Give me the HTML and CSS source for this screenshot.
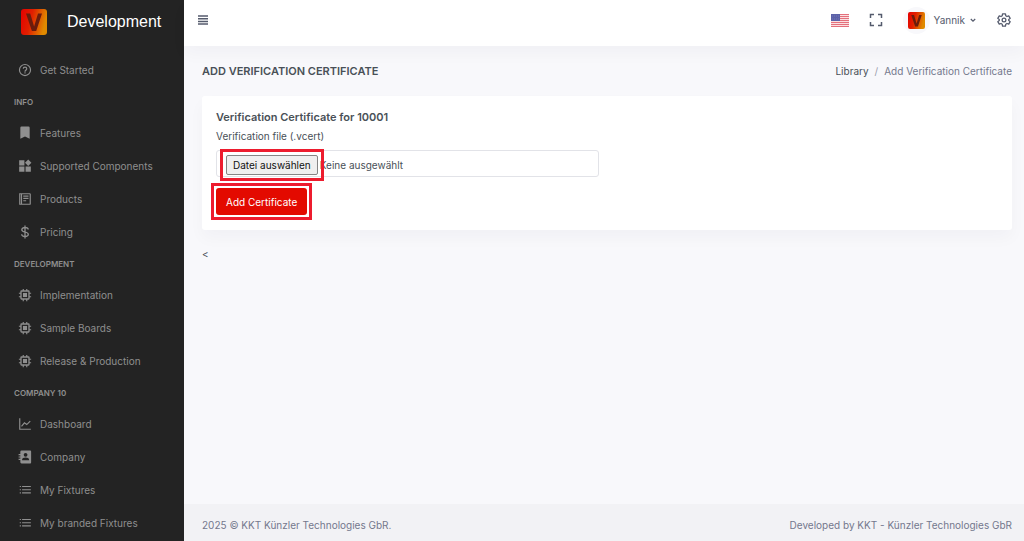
FILE: index.html
```html
<!DOCTYPE html>
<html lang="en">
<head>
<meta charset="utf-8">
<meta name="viewport" content="width=device-width, initial-scale=1">
<title>Add Verification Certificate</title>
<link rel="stylesheet" href="styles.css">
</head>
<body>
<svg class="defs" aria-hidden="true">
  <defs>
    <linearGradient id="brand" x1="0" y1="0" x2="1" y2="0.25">
      <stop offset="0" stop-color="#e60000"/><stop offset="0.45" stop-color="#e02000"/><stop offset="1" stop-color="#e08a00"/>
    </linearGradient>
    <symbol id="logo" viewBox="0 0 26 26">
      <rect width="26" height="26" rx="3" fill="url(#brand)"/>
      <path d="M5 4.500h4.200l3.900 13 3.900-13h4L15.200 22h-4.300z" fill="#6b1c0c"/>
    </symbol>
    <symbol id="chip" viewBox="0 0 24 24">
      <path d="M20 8V6a2 2 0 0 0-2-2h-2V1.500h-2V4h-4V1.500H8V4H6a2 2 0 0 0-2 2v2H1.500v2H4v4H1.500v2H4v2a2 2 0 0 0 2 2h2v2.500h2V20h4v2.500h2V20h2a2 2 0 0 0 2-2v-2h2.500v-2H20v-4h2.500V8zM6.300 17.700V6.300h11.400v11.400z"/><path d="M8.500 8.500h7v7h-7z"/>
    </symbol>
    <symbol id="list" viewBox="0 0 24 24">
      <path d="M3 5h2v2H3zm0 5.500h2v2H3zM3 16h2v2H3zM7 5h15v2H7zm0 5.500h15v2H7zM7 16h15v2H7z"/>
    </symbol>
  </defs>
</svg>
<div class="app">
  <aside class="sidebar">
    <a class="brand" href="#"><svg class="brand-logo"><use href="#logo"/></svg><span>Development</span></a>
    <nav class="menu">
      <a class="item" href="#"><svg class="icon" viewBox="0 0 24 24"><path d="M12 1.500a10.500 10.500 0 1 0 0 21 10.500 10.500 0 0 0 0-21zm0 19a8.500 8.500 0 1 1 0-17 8.500 8.500 0 0 1 0 17z"/><path d="M11 16h2v2h-2zM12 6a4 4 0 0 0-4 4h2a2 2 0 1 1 4 0c0 .5-.4 1-1.400 1.700-.9.700-1.600 1.500-1.600 2.800v.5h2v-.5c0-.4.4-.8 1.200-1.400C15.300 12.200 16 11.300 16 10a4 4 0 0 0-4-4z"/></svg>Get Started</a>
      <h2 class="heading">INFO</h2>
      <a class="item" href="#"><svg class="icon" viewBox="0 0 24 24"><path d="M20 22V3a2 2 0 0 0-2-2H6a2 2 0 0 0-2 2v19l8-4z"/></svg>Features</a>
      <a class="item" href="#"><svg class="icon" viewBox="0 0 24 24"><path d="M2 2h9v9H2zm0 11h9v9H2zm11 0h9v9h-9zM17.500 1 23 6.500 17.500 12 12 6.500z"/></svg>Supported Components</a>
      <a class="item" href="#"><svg class="icon" viewBox="0 0 24 24"><path d="M20 2H2v20h18a2 2 0 0 0 2-2V4a2 2 0 0 0-2-2zM4 20V4h1v16zm16 0H7V4h13z"/><path d="M9 6h9v2H9zm0 4h9v2H9zm0 4h5v2H9z"/></svg>Products</a>
      <a class="item" href="#"><svg class="icon" viewBox="0 0 24 24"><path d="M12 1v22M17.500 7.500C17.500 5 15 4.300 12 4.300S6.500 5.500 6.500 8 9 11.300 12 12s5.700 1.500 5.700 4-2.500 3.700-5.700 3.700-5.700-1.200-5.700-3.700" fill="none" stroke="currentColor" stroke-width="2.200"/></svg>Pricing</a>
      <h2 class="heading">DEVELOPMENT</h2>
      <a class="item" href="#"><svg class="icon"><use href="#chip"/></svg>Implementation</a>
      <a class="item" href="#"><svg class="icon"><use href="#chip"/></svg>Sample Boards</a>
      <a class="item" href="#"><svg class="icon"><use href="#chip"/></svg>Release &amp; Production</a>
      <h2 class="heading">COMPANY 10</h2>
      <a class="item" href="#"><svg class="icon" viewBox="0 0 24 24"><path d="M3 2v19h19M6 16l5-6 4 3 6-6" fill="none" stroke="currentColor" stroke-width="2"/></svg>Dashboard</a>
      <a class="item" href="#"><svg class="icon" viewBox="0 0 24 24"><path fill-rule="evenodd" d="M21 1H6a2 2 0 0 0-2 2v4H1v2h3v2H1v2h3v2H1v2h3v4a2 2 0 0 0 2 2h15a1.500 1.500 0 0 0 1.500-1.500v-19A1.500 1.500 0 0 0 21 1zm-8 4a3 3 0 1 1 0 6.500A3 3 0 0 1 13 5zm6 12.500H7v-1c0-2 2.700-3.500 6-3.500s6 1.500 6 3.500z"/></svg>Company</a>
      <a class="item" href="#"><svg class="icon"><use href="#list"/></svg>My Fixtures</a>
      <a class="item" href="#"><svg class="icon"><use href="#list"/></svg>My branded Fixtures</a>
    </nav>
  </aside>
  <div class="page">
    <header class="topbar">
      <button class="tool" type="button" aria-label="Toggle menu"><svg class="bars" viewBox="0 0 12 12"><path d="M1 2h10M1 4.700h10M1 7.400h10M1 10.100h10" stroke="currentColor" stroke-width="1.500"/></svg></button>
      <div class="tools">
        <button class="tool" type="button" aria-label="Language"><svg class="flag" viewBox="0 0 18 13"><path fill="#fbdfe1" d="M0 0h18v13H0z"/><path d="M0 .5h18M0 2.500h18M0 4.500h18M0 6.500h18M0 8.500h18M0 10.500h18M0 12.500h18" stroke="#e4707c"/><path fill="#5c62a8" d="M0 0h9v7H0z"/><path d="M1 2h7M1 5h7" stroke="#7277b8" stroke-dasharray="1 1"/></svg></button>
        <button class="tool" type="button" aria-label="Full screen"><svg class="expand" viewBox="0 0 14 14"><path d="M1.500 5V1.500H5M9 1.500h3.500V5M12.500 9v3.500H9M5 12.500H1.500V9" fill="none" stroke="currentColor" stroke-width="1.500"/></svg></button>
        <button class="tool user" type="button"><span class="avatar"><svg class="avatar-logo"><use href="#logo"/></svg></span>Yannik<svg class="chevron" viewBox="0 0 8 8"><path d="M1.800 3l2.200 2.200L6.200 3" fill="none" stroke="currentColor" stroke-width="1.200"/></svg></button>
        <button class="tool" type="button" aria-label="Settings"><svg class="gear" viewBox="0 0 24 24" fill="none" stroke="currentColor" stroke-width="2.200" stroke-linejoin="round"><circle cx="12" cy="12" r="3.200"/><path d="M9.500 1.500h5l.6 3.300 2 1.200 3-1.100 2.500 4.300-2.500 2.100v1.400l2.500 2.100-2.500 4.300-3-1.100-2 1.200-.6 3.300h-5l-.6-3.300-2-1.200-3 1.100-2.500-4.300 2.500-2.100v-1.400L1.400 9.200l2.500-4.300 3 1.100 2-1.200z"/></svg></button>
      </div>
    </header>
    <main class="content">
      <div class="title-row">
        <h1>ADD VERIFICATION CERTIFICATE</h1>
        <nav class="crumbs" aria-label="Breadcrumb"><a href="#">Library</a><span class="slash">/</span><span>Add Verification Certificate</span></nav>
      </div>
      <form class="card">
        <h2>Verification Certificate for 10001</h2>
        <label class="field-label" for="vcert">Verification file (.vcert)</label>
        <div class="file-box">
          <input class="file-input" id="vcert" type="file" accept=".vcert">
          <span class="marked marked-file"><label class="file-button" for="vcert">Datei auswählen</label></span>
          <span class="file-name">Keine ausgewählt</span>
        </div>
        <span class="marked marked-submit"><button class="submit" type="submit">Add Certificate</button></span>
      </form>
      <p class="stray">&lt;</p>
    </main>
    <footer class="footer"><span>2025 © KKT Künzler Technologies GbR.</span><span>Developed by KKT - Künzler Technologies GbR</span></footer>
  </div>
</div>
</body>
</html>
```
FILE: styles.css
```css
* { box-sizing: border-box; }
body {
  margin: 0;
  background: #f8f8fb;
  color: #495057;
  font: 10px/16px Inter, "Open Sans", sans-serif;
}
h1, h2, p { margin: 0; }
a { color: inherit; text-decoration: none; }
button { font: inherit; color: inherit; cursor: pointer; }
svg { display: block; flex: none; }
.defs { position: absolute; width: 0; height: 0; }

.app { display: flex; height: 100vh; }

.sidebar {
  flex: none;
  width: 184px;
  overflow: hidden;
  background: #232323;
  color: #8f8f8f;
}
.brand {
  display: flex;
  align-items: center;
  gap: 20px;
  height: 44px;
  padding-left: 21px;
  color: #fff;
  font: 16px/20px "Liberation Sans", Arial, sans-serif;
}
.brand-logo { width: 26px; height: 26px; }
.menu { padding-top: 9px; }
.item {
  display: flex;
  align-items: center;
  gap: 8px;
  height: 33px;
  padding-left: 18px;
  white-space: nowrap;
}
.icon { width: 14px; height: 14px; fill: currentColor; }
.heading {
  height: 30px;
  padding-left: 14px;
  font-size: 8px;
  font-weight: 600;
  line-height: 32px;
}

.page { display: flex; flex: 1; flex-direction: column; min-width: 0; }
.topbar {
  display: flex;
  align-items: center;
  justify-content: space-between;
  height: 46px;
  padding: 0 13px 6px;
  background: #fff;
  box-shadow: 0 8px 16px rgba(18, 38, 63, 0.03);
  color: #555b6d;
}
.tools { display: flex; align-items: center; gap: 20px; }
.tool {
  display: flex;
  align-items: center;
  padding: 0;
  border: 0;
  background: none;
}
.bars { width: 12px; height: 12px; }
.flag { width: 18px; height: 13px; }
.expand { width: 14px; height: 14px; }
.gear { width: 14px; height: 14px; }
.user { gap: 4px; }
.avatar { padding: 5px; border-radius: 50%; background: #f8f8fb; }
.avatar-logo { width: 17px; height: 17px; }
.chevron { width: 8px; height: 8px; }

.content { flex: 1; padding: 17px 12px 0 18px; }
.title-row { display: flex; justify-content: space-between; align-items: center; margin-bottom: 17px; }
h1 { font-size: 11px; font-weight: 600; line-height: 16px; }
.crumbs { display: flex; gap: 6px; color: #74788d; }
.crumbs a { color: #495057; }
.slash { color: #9a9dab; }

.card {
  padding: 13px 14px 15px;
  border-radius: 3px;
  background: #fff;
  box-shadow: 0 8px 16px rgba(18, 38, 63, 0.03);
}
.card h2 { font-size: 11px; font-weight: 600; line-height: 16px; }
.field-label { display: block; margin: 3px 0 6px; }
.file-box {
  display: flex;
  align-items: center;
  position: relative;
  width: 49%;
  height: 27px;
  margin-bottom: 11px;
  padding: 2px 0 0 9px;
  border: 1px solid #e2e3e8;
  border-radius: 3px;
}
.file-input { position: absolute; width: 1px; height: 1px; opacity: 0; }
.file-button {
  display: block;
  padding: 1px 6px;
  border: 1px solid #858585;
  border-radius: 2px;
  background: #efefef;
  color: #111;
  white-space: nowrap;
}
.file-name { padding-left: 2px; }
.submit {
  display: block;
  height: 27px;
  padding: 0 10px;
  border: 0;
  border-radius: 3px;
  background: #e30a00;
  color: #fff;
}
.marked { position: relative; }
.marked::after {
  content: "";
  position: absolute;
  border: 3px solid #ed1c2e;
  pointer-events: none;
}
.marked-file::after { inset: -6px; }
.marked-submit { display: table; }
.marked-submit::after { inset: -5px; }
.stray { margin-top: 16px; }

.footer {
  display: flex;
  align-items: center;
  justify-content: space-between;
  height: 37px;
  padding: 5px 12px 0 18px;
  background: #f2f2f5;
  color: #74788d;
}
```
